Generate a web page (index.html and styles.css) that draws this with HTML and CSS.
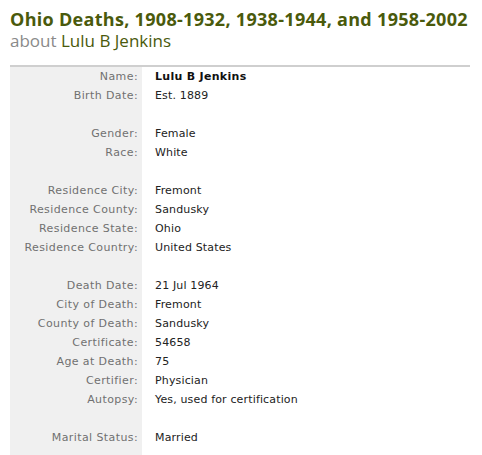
FILE: index.html
```html
<!DOCTYPE html>
<html>
<head>
<meta charset="utf-8">
<link rel="stylesheet" href="styles.css">
</head>
<body>
<div class="page">
  <h1 class="title">Ohio Deaths, 1908-1932, 1938-1944, and 1958-2002</h1>
  <h2 class="subtitle"><span class="about">about</span> Lulu B Jenkins</h2>
  <table class="record">
    <tr><th>Name:</th><td class="name">Lulu B Jenkins</td></tr>
    <tr><th>Birth Date:</th><td>Est. 1889</td></tr>
    <tr class="gap"><th></th><td></td></tr>
    <tr><th>Gender:</th><td>Female</td></tr>
    <tr><th>Race:</th><td>White</td></tr>
    <tr class="gap"><th></th><td></td></tr>
    <tr><th>Residence City:</th><td>Fremont</td></tr>
    <tr><th>Residence County:</th><td>Sandusky</td></tr>
    <tr><th>Residence State:</th><td>Ohio</td></tr>
    <tr><th>Residence Country:</th><td>United States</td></tr>
    <tr class="gap"><th></th><td></td></tr>
    <tr><th>Death Date:</th><td>21 Jul 1964</td></tr>
    <tr><th>City of Death:</th><td>Fremont</td></tr>
    <tr><th>County of Death:</th><td>Sandusky</td></tr>
    <tr><th>Certificate:</th><td>54658</td></tr>
    <tr><th>Age at Death:</th><td>75</td></tr>
    <tr><th>Certifier:</th><td>Physician</td></tr>
    <tr><th>Autopsy:</th><td>Yes, used for certification</td></tr>
    <tr class="gap"><th></th><td></td></tr>
    <tr><th>Marital Status:</th><td>Married</td></tr>
    <tr class="gap"><th></th><td></td></tr>
  </table>
</div>
</body>
</html>
```
FILE: styles.css
```css
html, body { margin: 0; padding: 0; background: #fff; }
.page { padding: 8px 12px 0 10px; }
.title {
  margin: 0;
  font-family: "Open Sans", sans-serif;
  font-weight: 700;
  font-size: 18px;
  letter-spacing: 0.3px;
  line-height: 22px;
  color: #4a5a0c;
  white-space: nowrap;
}
.subtitle {
  margin: 0;
  font-family: "Open Sans", sans-serif;
  font-weight: 400;
  font-size: 17px;
  line-height: 22px;
  color: #4a5a0c;
}
.about { color: #8a8a8a; }
.record {
  margin-top: 13px;
  width: 460px;
  border-collapse: collapse;
  border-top: 2px solid #cfcfcf;
  font-family: "DejaVu Sans", Verdana, sans-serif;
  font-size: 11px;
}
.record th {
  width: 122px;
  background: #f0f0f0;
  color: #707070;
  font-weight: 400;
  text-align: right;
  letter-spacing: 0.4px;
  padding: 0 4px 0 6px;
  height: 19px;
  white-space: nowrap;
}
.record td {
  padding: 0 0 0 13px;
  color: #222;
  letter-spacing: 0.15px;
  height: 19px;
  white-space: nowrap;
}
.record td.name { font-weight: 700; color: #111; letter-spacing: 0.3px; }
```
